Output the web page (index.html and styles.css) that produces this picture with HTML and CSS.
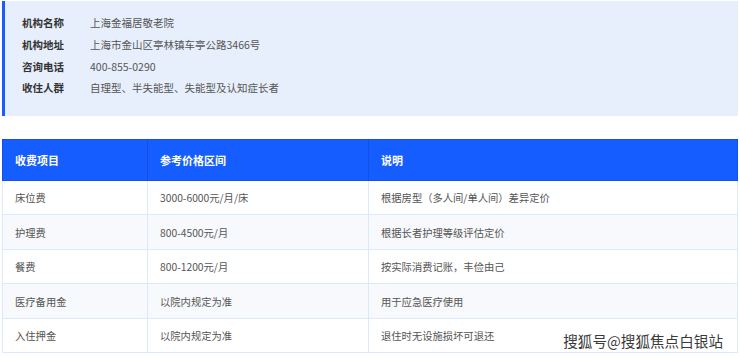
FILE: index.html
```html
<!DOCTYPE html>
<html lang="zh-CN">
<head>
    <meta charset="UTF-8">
    <title>上海金福居敬老院 收费标准</title>
    <link rel="stylesheet" href="styles.css">
</head>
<body>
<div class="info">
    <div class="info-row"><span class="label">机构名称</span><span>上海金福居敬老院</span></div>
    <div class="info-row"><span class="label">机构地址</span><span>上海市金山区亭林镇车亭公路3466号</span></div>
    <div class="info-row"><span class="label">咨询电话</span><span>400-855-0290</span></div>
    <div class="info-row"><span class="label">收住人群</span><span>自理型、半失能型、失能型及认知症长者</span></div>
</div>
<table class="fees">
    <colgroup>
        <col class="c1">
        <col class="c2">
        <col>
    </colgroup>
    <thead>
    <tr><th>收费项目</th><th>参考价格区间</th><th>说明</th></tr>
    </thead>
    <tbody>
    <tr><td>床位费</td><td>3000-6000元/月/床</td><td>根据房型（多人间/单人间）差异定价</td></tr>
    <tr><td>护理费</td><td>800-4500元/月</td><td>根据长者护理等级评估定价</td></tr>
    <tr><td>餐费</td><td>800-1200元/月</td><td>按实际消费记账，丰俭由己</td></tr>
    <tr><td>医疗备用金</td><td>以院内规定为准</td><td>用于应急医疗使用</td></tr>
    <tr><td>入住押金</td><td>以院内规定为准</td><td>退住时无设施损坏可退还</td></tr>
    </tbody>
</table>
<div class="watermark">搜狐号@搜狐焦点白银站</div>
</body>
</html>
```

FILE: styles.css
```css
body {
  margin: 0;
  padding: 1px 2px 0;
  background: white;
  font-family: "Noto Sans CJK SC", "Noto Sans", sans-serif;
  color: #555;
  position: relative;
  height: 355px;
  overflow: hidden;
}

.info {
  background: #e8effc;
  border-left: 3px solid #1a5cff;
  padding: 11px 0 17px 17px;
  font-size: 10.5px;
}

.info-row {
  display: flex;
  height: 21.7px;
  align-items: center;
}

.info .label {
  width: 68px;
  font-weight: bold;
  color: #333;
}

.fees {
  margin-top: 23px;
  width: 736px;
  border-collapse: collapse;
  table-layout: fixed;
  font-size: 10.3px;
}

.fees .c1 {
  width: 145px;
}

.fees .c2 {
  width: 221px;
}

.fees th {
  background: #165dff;
  color: white;
  text-align: left;
  font-weight: bold;
  font-size: 11px;
  height: 40px;
  padding: 0 12px;
  border: 1px solid #1450e6;
}

.fees td {
  height: 33.5px;
  padding: 0 12px;
  border: 1px solid #dce8fb;
}

.fees tbody tr:nth-child(2n) {
  background: #f7f9fc;
}

.watermark {
  position: absolute;
  right: 17px;
  bottom: 5px;
  font-size: 14.6px;
  color: #3a3a3a;
  text-shadow: 1px 0 0 white, -1px 0 0 white, 0 1px 0 white, 0 -1px 0 white;
}
```
